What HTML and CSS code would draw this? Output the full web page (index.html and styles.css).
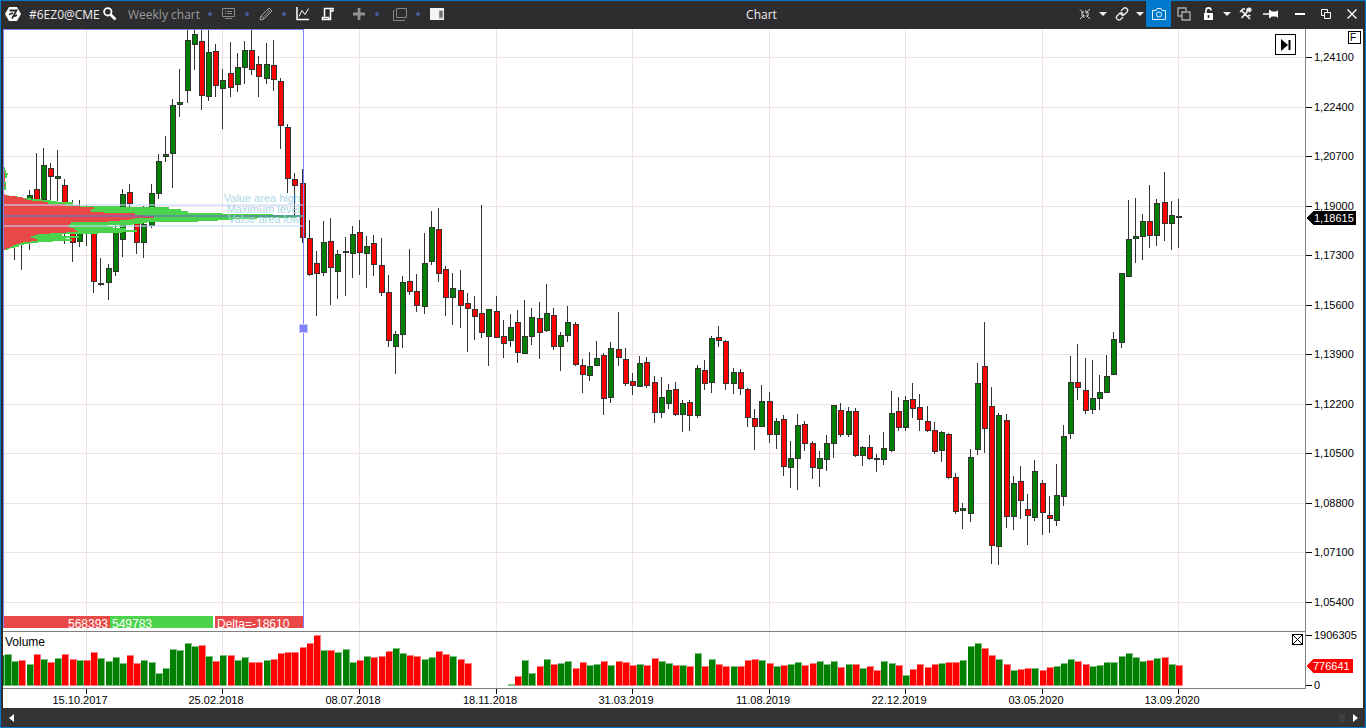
FILE: index.html
```html
<!DOCTYPE html>
<html lang="en">
<head>
<meta charset="utf-8">
<title>Chart</title>
<link rel="stylesheet" href="styles.css">
</head>
<body>
<div class="window">
  <header class="titlebar">
    <button class="tool logo" aria-label="Menu"><svg width="16" height="14" viewBox="0 0 16 14"><path d="M4 0h8l4 7-4 7H4L0 7z" fill="#fff"/><path d="M4.500 3.500h7L7 11.500M4 7.500l4-1.500M9 9.500l3-1.500" fill="none" stroke="#2d2d30" stroke-width="1.800"/></svg></button>
    <span class="symbol">#6EZ0@CME</span>
    <button class="tool search" aria-label="Search"><svg width="14" height="14" viewBox="0 0 14 14" fill="none" stroke="#fff"><circle cx="4.800" cy="4.800" r="3.700" stroke-width="1.800"/><path d="M7.500 7.500l5 5" stroke-width="2.600"/></svg></button>
    <span class="period">Weekly chart</span>
    <span class="dot"></span>
    <button class="tool" aria-label="Templates"><svg width="14" height="12" viewBox="0 0 14 12" fill="none" stroke="#8a8a8c"><path d="M.5.5h12v8H.5zM3 3.500h1m1 0h5M3 5.500h1m1 0h5M3 10.500h7"/></svg></button>
    <span class="dot"></span>
    <button class="tool" aria-label="Draw"><svg width="14" height="14" viewBox="0 0 14 14" fill="none" stroke="#a0a0a2"><path d="M1 13l1-4 8-8 3 3-8 8zM8.500 2.500l3 3M2 9l3 3M4 10.500l6-6"/></svg></button>
    <span class="dot"></span>
    <button class="tool" aria-label="Indicators"><svg width="14" height="14" viewBox="0 0 14 14" fill="none" stroke="#fff"><path d="M1 0v12.500h12" stroke-width="1.500"/><path d="M3 9.500l3-6 3 4 3.500-6"/></svg></button>
    <button class="tool after-medium" aria-label="Strategies"><svg width="14" height="14" viewBox="0 0 14 14" fill="none" stroke="#fff" stroke-width="1.500"><path d="M3.500 9.500V1.500h8.500v2.500h-2M9.500 1.500v11H1.500v-2h6v2"/></svg></button>
    <button class="tool after-large" aria-label="Add"><svg width="14" height="14" viewBox="0 0 14 14"><path d="M7 1v12M1 7h12" stroke="#919193" stroke-width="2.800"/></svg></button>
    <span class="dot"></span>
    <button class="tool after-small" aria-label="Windows"><svg width="14" height="13" viewBox="0 0 14 13" fill="none" stroke="#858587"><path d="M3.500.5h10v9h-10zM1.500 2.500h-1v10h11v-1"/></svg></button>
    <span class="dot"></span>
    <button class="tool" aria-label="Side panel"><svg width="14" height="12" viewBox="0 0 14 12"><path d="M0 0h14v12H0z" fill="#f4f4f4"/><path d="M9 2.500h4v8H9z" fill="#aaa"/><path d="M9.500 4h3m-3 2h3m-3 2h3" stroke="#333"/></svg></button>
    <h1 class="title">Chart</h1>
    <button class="action" aria-label="Compress"><svg width="12" height="12" viewBox="0 0 12 12" fill="none" stroke="#d8d8d8"><path d="M1 11l4-4M7 5l4-4M1 1.500l3 3M8 8l3 3M2 7h3v3M7 2v3h3M4 3v2H2M8 9V7h2"/></svg></button>
    <button class="caret" aria-label="More sizes"></button>
    <button class="action" aria-label="Link"><svg width="14" height="14" viewBox="0 0 14 14" fill="none" stroke="#e8e8e8" stroke-width="1.400"><path d="M6 4l2.500-2.500c2-2 5.500 1 3.500 3.500L9.500 7.500C8 9 6 8 6 6.500M8 10l-2.500 2.500C3.500 14 0 11.500 2 9l2.500-2.500C6 5 8 6 8 7.500"/></svg></button>
    <button class="caret" aria-label="More links"></button>
    <button class="action camera" aria-label="Screenshot"><svg width="14" height="12" viewBox="0 0 14 12" fill="none" stroke="#e4f2ff"><path d="M.5 2.500H4l1-2h4l1 2h3.500v9H.5z"/><circle cx="7" cy="6.500" r="2.500"/></svg></button>
    <button class="action" aria-label="Duplicate"><svg width="14" height="14" viewBox="0 0 14 14" fill="#2d2d30" stroke="#a8a8aa" stroke-width="1.400"><path d="M1 1h8v8H1z"/><path d="M5 5h8v8H5z"/></svg></button>
    <button class="action" aria-label="Lock"><svg width="11" height="14" viewBox="0 0 11 14"><path d="M3 7V3.500C3 0 8 0 8 3.500" fill="none" stroke="#fff" stroke-width="1.600"/><path d="M1 6h9v7H1z" fill="#fff"/><path d="M5.500 8v3" stroke="#2d2d30" stroke-width="1.600"/></svg></button>
    <button class="caret" aria-label="Lock options"></button>
    <button class="action" aria-label="Settings"><svg width="14" height="14" viewBox="0 0 14 14" fill="none" stroke="#f0f0f0" stroke-width="1.700"><path d="M1 5l3-3h2M2.500 3.500L11 12M12.500 2.500l-2 2-1-1 1.500-2c-3-.5-3.500 2-3 3.500L2.500 11M9 8.500h2.500"/></svg></button>
    <button class="action" aria-label="Pin"><svg width="16" height="10" viewBox="0 0 16 10"><path d="M0 4.200h6V1h1.500l1 1.500h5L14 1.500h1v7h-1l-.5-1h-5L7.500 9H6V5.800H0z" fill="#fff"/></svg></button>
    <div class="window-controls">
      <button class="control" aria-label="Minimize"><svg width="10" height="10"><path d="M0 5h10" stroke="#fff" stroke-width="2"/></svg></button>
      <button class="control" aria-label="Restore"><svg width="10" height="10" fill="#2d2d30" stroke="#fff"><path d="M.5.5h6v6h-6z"/><path d="M3.500 3.500h6v6h-6z"/></svg></button>
      <button class="control" aria-label="Close"><svg width="10" height="10"><path d="M.5.5l9 9m0-9l-9 9" stroke="#fff" stroke-width="1.400"/></svg></button>
    </div>
  </header>

  <main class="chart">
    <section class="panel price">
      <svg class="canvas" id="price" role="img" aria-label="Weekly candles"></svg>
      <button class="jump" aria-label="Go to last bar"><svg width="12" height="12"><path d="M1 0v12l7-6z" fill="#000"/><path d="M9.500 1v10" stroke="#000" stroke-width="2"/></svg></button>
    </section>
    <section class="scale">
      <svg class="canvas" id="price-scale" role="img" aria-label="Price scale"></svg>
      <button class="fix">F</button>
    </section>
    <section class="panel volume">
      <svg class="canvas" id="volume" role="img" aria-label="Volume"></svg>
      <h2 class="caption">Volume</h2>
      <button class="close" aria-label="Close volume"><svg width="9" height="9"><path d="M0 0l9 9M9 0L0 9" stroke="#000"/></svg></button>
    </section>
    <section class="scale">
      <svg class="canvas" id="volume-scale" role="img" aria-label="Volume scale"></svg>
    </section>
    <section class="dates">
      <svg class="canvas" id="dates" role="img" aria-label="Dates"></svg>
    </section>
  </main>

  <footer class="scrollbar">
    <button class="arrow" aria-label="Scroll left"><svg width="5" height="8"><path d="M5 0v8L0 4z" fill="#fff"/></svg></button>
    <span class="thumb"></span>
    <button class="arrow" aria-label="Scroll right"><svg width="5" height="8"><path d="M0 0v8l5-4z" fill="#fff"/></svg></button>
  </footer>
</div>
<script src="chart.js"></script>
</body>
</html>
```
FILE: styles.css
```css
* { box-sizing: border-box; }
body {
  margin: 0;
  font-family: "Liberation Sans", Arial, sans-serif;
  font-size: 11px;
}
button {
  padding: 0;
  border: 0;
  background: none;
  color: inherit;
  font: inherit;
}
svg { display: block; }
.window {
  display: flex;
  flex-direction: column;
  height: 100vh;
  border: 1px solid #007acc;
  background: #2d2d30;
}
.titlebar {
  display: flex;
  flex: none;
  align-items: center;
  height: 28px;
  padding: 0 0 2px 4px;
  color: #f1f1f1;
  font: 12px "Open Sans", "Noto Sans", sans-serif;
}
.tool, .action, .control, .caret {
  display: flex;
  flex: none;
  align-items: center;
  justify-content: center;
  height: 26px;
}
.tool { width: 20px; }
.logo { width: 16px; }
.symbol { flex: none; width: 82px; padding-left: 8px; white-space: nowrap; }
.search { width: 14px; }
.period { flex: none; width: 85px; padding-left: 11px; color: #999; white-space: nowrap; }
.dot { display: flex; flex: none; justify-content: center; width: 17px; padding-right: 2px; }
.dot::before { content: ""; width: 4px; height: 4px; border-radius: 2px; background: #465a9c; }
.after-small { margin-left: 4px; }
.after-medium { margin-left: 5px; }
.after-large { margin-left: 11px; }
.title { flex: 1; margin: 0; padding-left: 4px; text-align: center; font-size: 12px; font-weight: 400; }
.action { width: 25px; }
.camera { background: #007acc; }
.caret { width: 12px; }
.caret::before { content: ""; border: 4px solid transparent; border-top-color: #f1f1f1; border-bottom: 0; }
.window-controls { display: flex; margin-left: 4px; }
.control { width: 26px; }

.chart {
  display: grid;
  flex: 1;
  grid-template-columns: 1fr 57px;
  grid-template-rows: 1fr 57px 19px;
  min-height: 0;
  margin: 0 2px;
  background: #fff;
}
.panel {
  position: relative;
  border-right: 1px solid #808080;
  border-bottom: 1px solid #808080;
  overflow: hidden;
}
.scale { position: relative; }
.scale .canvas { overflow: visible; }
.dates { grid-column: 1 / 3; overflow: hidden; }
.canvas { width: 100%; height: 100%; shape-rendering: crispEdges; }
.canvas text { font-size: 11px; fill: #000; }
.canvas .middle { text-anchor: middle; }
.canvas .end { text-anchor: end; }
.canvas .level { fill: #add8e6; text-anchor: end; }
.canvas .total { fill: #fff; font-size: 12px; }
.canvas .current { fill: #fff; }
.grid { stroke: #eee2e6; fill: none; }
.tick { stroke: #000; fill: none; }
.wick { stroke: #333; fill: none; }
.up { fill: #008000; stroke: #333; }
.down { fill: #f00; stroke: #333; }
.bar-up { fill: #008000; }
.bar-down { fill: #f00; }
.edge { opacity: .5; }
.buy { fill: #4bd44b; }
.sell { fill: #e84848; }
.frame { stroke: #8080ff; fill: none; }
.jump, .close, .fix {
  display: flex;
  position: absolute;
  align-items: center;
  justify-content: center;
  border: 1px solid #000;
  background: #fff;
  color: #000;
}
.jump { top: 5px; right: 9px; width: 21px; height: 21px; }
.fix { top: 2px; right: 2px; width: 13px; height: 13px; justify-content: flex-start; padding-left: 1px; font-size: 10px; }
.close { top: 2px; right: 2px; width: 11px; height: 11px; }
.caption { position: absolute; top: 3px; left: 2px; margin: 0; font-size: 12px; font-weight: 400; }
.scrollbar {
  display: flex;
  flex: none;
  align-items: center;
  height: 19px;
  padding: 0 4px 0 8px;
  background: #333335;
}
.arrow { display: flex; align-items: center; width: 8px; height: 16px; }
.thumb { width: 6px; height: 8px; margin: 0 8px 0 auto; background: #3e3e40; }
```
FILE: chart.js
```js
// One row per week: colour, high, body top, body bottom, low. First row is week -10.
const candles = `
g 205 212 240 260;r 205 212 235 270;g 190 195 225 250;r 153 189 215 240;g 148 165 200 230;r 163 168 177 201;g 150 176 179 201;r 179 185 210 244;r 200 212 243 262;g 200 212 242 247
g 205 212 230 246;r 215 232 282 293;g 258 283 285 286;g 264 268 283 300;g 215 232 272 276;g 189 194 240 257;r 184 192 204 212;r 212 218 243 254;g 206 224 243 258;g 184 193 226 228
g 154 161 194 199;g 136 154 157 162;g 99 105 154 188;g 69 102 105 117;g 20 40 91 103;g 20 34 45 70;r 20 41 96 110;g 20 52 97 101;r 44 51 86 97;g 69 80 89 129
r 42 73 88 97;g 53 67 85 92;g 41 50 68 84;r 20 50 70 75;r 56 64 77 97;g 43 64 79 84;r 40 65 80 91;r 78 81 126 149;r 124 127 179 193;r 173 179 186 215
r 169 183 238 243;r 220 238 275 276;r 251 263 274 316;g 221 242 273 276;r 218 241 268 305;g 250 254 272 299;g 237 251 253 296;g 226 234 254 278;r 220 232 253 275;g 236 246 254 288
r 235 243 265 276;r 238 265 293 296;r 275 292 341 347;g 331 334 347 374;g 276 282 335 348;r 249 281 292 295;r 274 291 306 312;g 233 263 307 314;g 211 227 262 265;r 208 229 274 282
r 266 269 298 316;g 273 288 298 325;r 270 290 306 328;r 293 303 309 352;r 296 309 317 340;r 205 313 333 338;g 309 309 337 366;r 296 311 338 338;r 320 336 344 358;g 314 327 341 347
r 310 322 353 363;g 300 336 354 354;g 308 317 337 345;r 302 318 333 359;g 284 313 331 332;r 308 315 347 350;g 332 335 347 371;g 306 322 336 342;r 322 324 365 366;r 359 365 375 393
g 352 366 376 381;g 341 358 366 366;r 353 355 399 415;g 342 348 398 403;r 312 349 358 366;r 348 359 384 386;r 373 381 386 395;g 356 363 387 387;r 357 362 386 388;r 376 382 413 423
g 377 397 413 418;g 384 390 404 409;r 382 389 415 416;g 400 403 415 432;r 400 402 416 431;g 365 368 416 418;r 360 370 384 390;g 336 338 383 393;r 326 337 341 347;r 340 341 384 390
g 368 372 384 394;r 369 372 389 395;r 388 389 418 427;r 409 418 427 450;g 385 401 427 427;r 392 401 435 443;g 418 421 435 449;r 415 419 467 476;g 441 458 468 488;g 414 425 459 490
r 421 424 444 451;r 441 443 468 479;g 451 458 469 487;g 435 443 460 471;g 405 405 444 458;r 403 410 435 437;g 407 411 435 437;r 408 411 456 457;g 446 447 456 466;r 435 447 459 460
g 454 458 460 472;g 432 448 460 465;g 391 413 451 452;r 397 411 428 431;g 396 400 428 431;r 383 399 409 418;r 394 407 420 431;r 406 421 431 432;r 422 430 452 454;g 431 432 451 462
r 433 434 478 479;r 473 477 512 514;g 503 508 511 529;g 449 457 514 522;g 363 383 450 455;r 322 366 429 453;r 387 406 546 564;g 413 415 547 565;r 414 420 517 528;g 476 483 517 530
r 466 481 501 519;r 494 509 516 545;g 460 471 518 521;r 480 483 513 535;r 496 515 519 533;g 464 495 521 526;g 425 436 497 506;g 356 382 434 439;r 344 382 388 400;r 358 390 411 414
g 360 398 410 414;g 375 392 399 410;g 355 376 393 393;g 332 339 375 375;g 273 273 343 348;g 200 239 277 277;g 198 236 239 263;g 214 221 237 260;r 185 221 236 248;g 199 203 236 246
r 172 202 224 241;g 201 215 224 250;g 199 216 218 248`.trim().split(/[;\n]/).map(row => row.split(' '));

// Bar tops of the volume panel, first bar is week -12, "-" is a week without a bar.
const volumes = `
g655 g654 g661 r660 g664 r654 g659 r662 g658 r654 r659 g660 r660 r652 g658 g661 g657 g663 r655 r663 g660 g662 g673 g668 g649 g650 g643 g646 r645 g656 r661 g655
r655 g660 g657 r662 r662 g660 r659 r653 r652 r652 r647 r643 r635 g650 r650 g652 g649 g662 r660 g656 r657 r656 r651 g648 g653 r655 r656 g659 g657 r651 r654 g656 r659 r663
- - - - - g684 r676 g660 g673 r666 g659 r664 g663 g661 r668 r662 g665 g664 r661 g665 r661 r662 r665 g664 r665 r658 g661 g663 r665 g665 r666 g653 r666 g659 r664 r666 g666 r666 r660 r659 g660
r663 g666 r665 g664 g662 r665 r663 g661 g664 g661 r667 g664 r664 g668 r666 r670 g661 g663 r665 g675 r669 r664 r667 r664 g663 r662 r662 g660 g646 g643 r648 r655 g659 r664 g670 r669 r668
g668 r670 r667 g666 g663 g659 r661 r664 g666 g665 g662 g662 g656 g653 g657 g661 r660 g658 r657 g664 r665`.trim().split(/\s+/);

// Profile rows: y, right edge of the sell part, right edge of the buy part.
const profile = [
  [167,4,5],[170,4,6],[172,5,6],[173,5,8],[175,5,7],[178,5,5],[182,4,6],[184,5,6],[187,4,6],[190,0,0],
  [194,5,5],[195,7,9],[196,16,18],[197,22,23],[198,24,31],[199,27,42],[200,32,51],[201,43,57],[202,48,73],[204,65,73],
  [205,65,79],[206,80,120],[207,94,169],[209,91,181],[211,91,188],[212,104,188],[213,135,222],[214,135,273],
  [215,143,303],[216,154,303],[217,154,296],[218,135,257],[219,130,233],[220,120,218],[221,109,198],[222,71,147],
  [223,71,143],[224,69,133],[225,68,108],[226,68,123],[227,70,113],[228,74,126],[230,77,137],[232,66,122],
  [233,50,98],[234,38,62],[235,34,62],[236,31,79],[238,35,66],[239,37,72],[241,31,53],[242,23,38],[243,20,30],
  [244,16,24],[245,13,19],[246,12,19],[247,10,15],[248,7,10],[249,5,8],[250,0,0]
];

const weekX = i => Math.round(85.99 + 7.1845 * i);
const line = (d, cls) => `<path class="${cls}" d="${d}"/>`;
const box = (x, y, w, h, cls) => `<rect class="${cls}" x="${x}" y="${y}" width="${w}" height="${h}"/>`;
const text = (x, y, s, cls) => `<text class="${cls}" x="${x}" y="${y}">${s}</text>`;
const draw = (id, x, y, body) => {
  document.getElementById(id).innerHTML = `<g transform="translate(${-x} ${-y})">${body}</g>`;
};

const prices = [57, 107, 156, 206, 255, 305, 354, 404, 453, 503, 552, 602];
const dates = ['15.10.2017', '25.02.2018', '08.07.2018', '18.11.2018', '31.03.2019',
  '11.08.2019', '22.12.2019', '03.05.2020', '13.09.2020'];
const columns = dates.map((_, i) => weekX(i * 19));
const verticals = columns.map(x => line(`M${x}.5 0v700`, 'grid')).join('');

let body = verticals + prices.map(y => line(`M0 ${y}.5h4000`, 'grid')).join('');
candles.forEach(([c, high, top, bottom, low], n) => {
  const x = weekX(n - 10);
  body += line(`M${x}.5 ${high}V${low}`, 'wick');
  body += `<rect class="${c === 'g' ? 'up' : 'down'}" x="${x - 1.5}" y="${+top + .5}" width="5" height="${Math.max(1, bottom - top - 1)}"/>`;
});
profile.slice(0, -1).forEach(([y, sell, buy], n) => {
  const h = profile[n + 1][0] - y;
  if (buy) body += box(3, y, buy - 3, h, 'buy') + box(3, y, sell - 3, h, 'sell');
});
body += '<g fill="#c8d8ff" opacity=".55"><rect x="3" y="204" width="300" height="2"/><rect x="3" y="225" width="300" height="2"/></g>';
body += '<rect x="3" y="215" width="300" height="2" fill="#5f78c8" opacity=".6"/>';
body += text(300, 202, 'Value area high', 'level') + text(300, 213, 'Maximum level', 'level') + text(300, 223, 'Value area low', 'level');
body += box(3, 616, 107, 12, 'sell') + box(110, 616, 103, 12, 'buy') + box(215, 616, 88, 12, 'sell');
body += text(108, 628, '568393', 'total end') + text(112, 628, '549783', 'total') + text(217, 628, 'Delta=-18610', 'total');
body += line('M3.5 628V29.500H303.500V628', 'frame');
body += '<rect x="299" y="324" width="9" height="9" fill="#c8c8ff"/><rect x="300" y="325" width="7" height="7" fill="#8080ff"/>';
draw('price', 3, 29, body);

body = verticals;
volumes.forEach((v, n) => {
  if (v === '-') return;
  const x = weekX(n - 12), y = +v.slice(1), cls = v[0] === 'g' ? 'bar-up' : 'bar-down';
  body += box(x - 2, y, 7, 686 - y, cls + ' edge') + box(x - 2, y + 1, 6, Math.max(0, 684 - y), cls);
});
draw('volume', 3, 632, body);

body = prices.map((y, i) => line(`M1306 ${y}.5h6`, 'tick') +
  text(1314, y + 4, ((124100 - i * 1700) / 100000).toFixed(5).replace('.', ','), '')).join('');
body += '<path d="M1307 218l6-7h43v14h-43z"/>' + text(1314, 222, '1,18615', 'current');
draw('price-scale', 1306, 29, body);

body = line('M1306 635.500h6M1306 685.500h6', 'tick') + text(1314, 639, '1906305', '') + text(1314, 689, '0', '');
body += '<path d="M1307 666l6-7h40v14h-40z" fill="#f00"/>' + text(1313, 670, '776641', 'current');
draw('volume-scale', 1306, 632, body);

body = columns.map((x, i) => line(`M${x}.5 689v5`, 'tick') + text(x - 6, 704, dates[i], 'middle')).join('');
draw('dates', 3, 689, body);
```
